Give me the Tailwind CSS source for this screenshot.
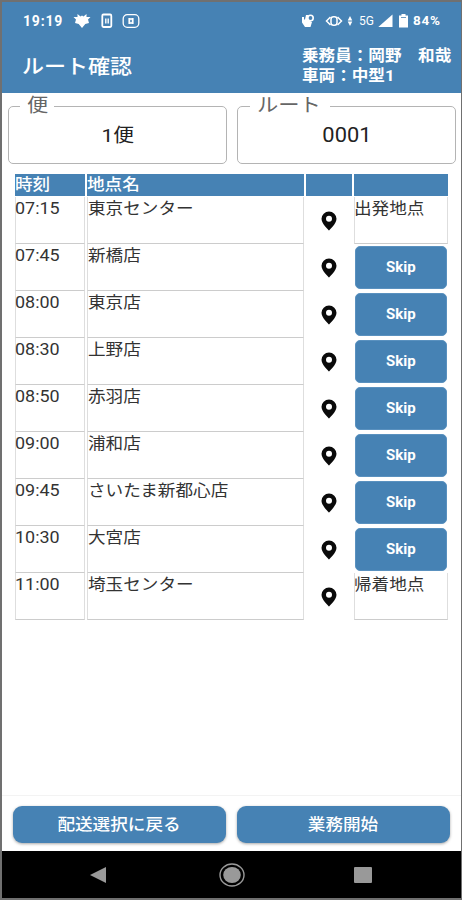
<!DOCTYPE html>
<html lang="ja">
<head>
<meta charset="utf-8">
<meta name="viewport" content="width=device-width, initial-scale=1">
<title>ルート確認</title>
<script src="https://cdn.jsdelivr.net/npm/@tailwindcss/browser@4"></script>
</head>
<body class="bg-white font-['Roboto','Noto_Sans_CJK_JP',sans-serif] text-[#333]">
<div class="flex h-[900px] w-[462px] flex-col overflow-hidden border-y-2 border-r border-l-2 border-[#707070] bg-white">

  <header class="h-[91px] shrink-0 bg-[#4682b4] text-white">
    <div class="flex h-[37px] items-center justify-between pr-[17px] pl-[21px]">
      <div class="flex items-center">
        <span class="w-[50px] text-[14px] leading-none font-bold tracking-[0.8px]">19:19</span>
        <svg class="h-4 w-[18px]" viewBox="0 0 18 16" fill="currentColor"><path d="M9 2.500 10.500 3.500 13.500 1 13.500 4 17.500 4 15 6.500 16 10 12.300 11 9 15 5.700 11 2 10 3 6.500 .5 4 4.500 4 4.500 1 7.500 3.500Z"/></svg>
        <svg class="ml-2.5 h-4 w-3" viewBox="0 0 12 16" fill="none" stroke="currentColor"><rect x="1.300" y="1.500" width="9" height="12.500" rx="1.200" stroke-width="1.800"/><path d="M4.800 5.500v5M7.200 5.500v5" stroke-width="1.400"/></svg>
        <svg class="ml-[9px] h-4 w-[18px]" viewBox="0 0 18 16" fill="none" stroke="currentColor"><rect x="1.200" y="1.700" width="15.600" height="12.600" rx="4" stroke-width="1.300"/><path d="M7.300 5v6M10.700 5v6" stroke-width="1.800"/><path d="M9 5v2M9 9v2" stroke-width="1.600"/></svg>
      </div>
      <div class="flex items-center">
        <svg class="h-4 w-[14px]" viewBox="0 0 14 16" fill="currentColor"><path d="M1 4h2v2.500h1L5 2h2.500l-.5 5L11 9l-1.500 5H4L1 9.500Z"/><circle cx="9.500" cy="5" r="2.700" fill="none" stroke="currentColor" stroke-width="1.600"/></svg>
        <svg class="ml-2.5 h-4 w-[18px]" viewBox="0 0 18 16" fill="none" stroke="currentColor" stroke-width="1.500"><path d="M5.500 4 1.500 8l4 4M12.500 4l4 4-4 4"/><rect x="6" y="3.700" width="6" height="8.600" rx="2.500"/></svg>
        <svg class="ml-1 h-4 w-[6px]" viewBox="0 0 6 16" fill="currentColor"><path d="M3 3 5.300 7.400H.7ZM3 13 .7 8.600h4.600Z"/></svg>
        <span class="ml-[6px] w-[16px] text-[12px] leading-none">5G</span>
        <svg class="ml-[3px] h-4 w-[15px]" viewBox="0 0 15 16" fill="currentColor"><path d="M14.500 1.500V14H.3Z"/></svg>
        <svg class="ml-[6px] h-4 w-[9px]" viewBox="0 0 9 16" fill="currentColor"><path d="M2.500 1h4v1.500H9V14.500H0v-12h2.500Z"/><path d="M2 4.500h5" stroke="#4682b4" stroke-width=".8"/></svg>
        <span class="ml-[5px] w-[31px] text-[13.500px] leading-none font-bold tracking-[0.8px]">84%</span>
      </div>
    </div>
    <div class="flex justify-between">
      <h1 class="mt-[14px] ml-[20px] origin-left scale-x-[1.1] text-[20px] leading-7 font-medium">ルート確認</h1>
      <div class="mt-[7px] w-[159px] origin-left scale-x-[1.07] text-[15.500px] leading-[20px] font-bold whitespace-pre"><div>乗務員：岡野　和哉</div><div>車両：中型1</div></div>
    </div>
  </header>

  <section class="flex h-[73px] shrink-0 gap-[10px] pl-[6px] text-[#222]">
    <fieldset class="h-[71px] w-[219px] rounded-[5px] border border-[#b4b4b4] pl-[11px]">
      <legend class="h-[26px] w-[34px] pl-[7px] text-[#666]"><span class="inline-block origin-left scale-x-[1.12] text-[19px] leading-[26px]">便</span></legend>
      <div class="-ml-[11px] text-center"><span class="inline-block scale-x-[1.1] text-[19px] leading-[33px]">1便</span></div>
    </fieldset>
    <fieldset class="h-[71px] w-[219px] rounded-[5px] border border-[#b4b4b4] pl-[12px]">
      <legend class="h-[26px] w-[80px] pl-[7px] text-[#666]"><span class="inline-block origin-left scale-x-[1.12] text-[19px] leading-[26px]">ルート</span></legend>
      <div class="-ml-[12px] text-center"><span class="inline-block scale-x-[1.12] text-[19.500px] leading-[33px]">0001</span></div>
    </fieldset>
  </section>

  <main class="mt-[8px] ml-[13px] w-[434px] grow">
    <div class="grid h-[23px] grid-cols-[70px_217px_46px_94px] gap-x-[2px] pb-[1px] text-[16px] leading-[22px] font-medium text-white">
      <div class="bg-[#4682b4]"><span class="inline-block origin-left scale-x-[1.1]">時刻</span></div>
      <div class="bg-[#4682b4]"><span class="inline-block origin-left scale-x-[1.1]">地点名</span></div>
      <div class="bg-[#4682b4]"></div>
      <div class="bg-[#4682b4]"></div>
    </div>
    <div id="rows"></div>
  </main>

  <footer class="flex h-[56px] shrink-0 gap-[11px] border-t border-[#f3f3f3] pt-[10px] pl-[11px] text-[16px] font-medium text-white">
    <button class="h-[37px] w-[213px] rounded-[9px] bg-[#4682b4] shadow-[0_1px_3px_rgba(0,0,0,0.35)]"><span class="inline-block scale-x-[1.1]">配送選択に戻る</span></button>
    <button class="h-[37px] w-[213px] rounded-[9px] bg-[#4682b4] shadow-[0_1px_3px_rgba(0,0,0,0.35)]"><span class="inline-block scale-x-[1.1]">業務開始</span></button>
  </footer>

  <nav class="flex h-[47px] shrink-0 items-center bg-black pl-[87px] text-[#999]">
    <svg class="h-[18px] w-[18px]" viewBox="0 0 18 18" fill="currentColor"><path d="M17 1v16L1 9Z"/></svg>
    <svg class="ml-[111px] h-[26px] w-[28px]" viewBox="0 0 28 26"><ellipse cx="14" cy="13" rx="12" ry="11" fill="none" stroke="currentColor" stroke-width="1.400"/><ellipse cx="14" cy="13" rx="8.800" ry="8" fill="currentColor"/></svg>
    <div class="ml-[108px] h-[16px] w-[18px] rounded-[1px] bg-[#999]"></div>
  </nav>
</div>

<script>
const stops = [
  ['07:15', '東京センター', '出発地点'], ['07:45', '新橋店'], ['08:00', '東京店'],
  ['08:30', '上野店'], ['08:50', '赤羽店'], ['09:00', '浦和店'],
  ['09:45', 'さいたま新都心店'], ['10:30', '大宮店'], ['11:00', '埼玉センター', '帰着地点']
];
document.getElementById('rows').innerHTML = stops.map(([time, name, note]) => `
  <div class="grid h-[47px] grid-cols-[70px_217px_46px_94px] gap-x-[2px] text-[16px] leading-[23px] whitespace-nowrap">
    <div class="border-x border-b border-[#dedede] border-b-[#ccc]"><span class="-ml-px inline-block origin-left scale-x-[1.12]">${time}</span></div>
    <div class="border-x border-b border-[#dedede] border-b-[#ccc]"><span class="inline-block origin-left scale-x-[1.1]">${name}</span></div>
    <div class="flex items-center justify-center"><svg class="h-[20px] w-[16px]" viewBox="0 0 16 20"><path fill="#0a0a0a" fill-rule="evenodd" d="M8 .5A7.500 7.300 0 0 0 .5 7.800C.5 12.800 8 19.500 8 19.500s7.500-6.700 7.500-11.700A7.500 7.300 0 0 0 8 .5Zm0 4.200a3 3 0 1 1 0 6 3 3 0 0 1 0-6Z"/></svg></div>
    ${note
      ? `<div class="border-x border-b border-[#dedede] border-b-[#ccc]"><span class="-ml-px inline-block origin-left scale-x-[1.1]">${note}</span></div>`
      : `<div class="px-[1px] pt-[2px]"><button class="h-[43px] w-full rounded-[5px] border border-[#5a91bf] bg-[#4682b4] text-[14px] font-bold text-white"><span class="inline-block scale-x-[1.07]">Skip</span></button></div>`}
  </div>`).join('');
</script>
</body>
</html>
